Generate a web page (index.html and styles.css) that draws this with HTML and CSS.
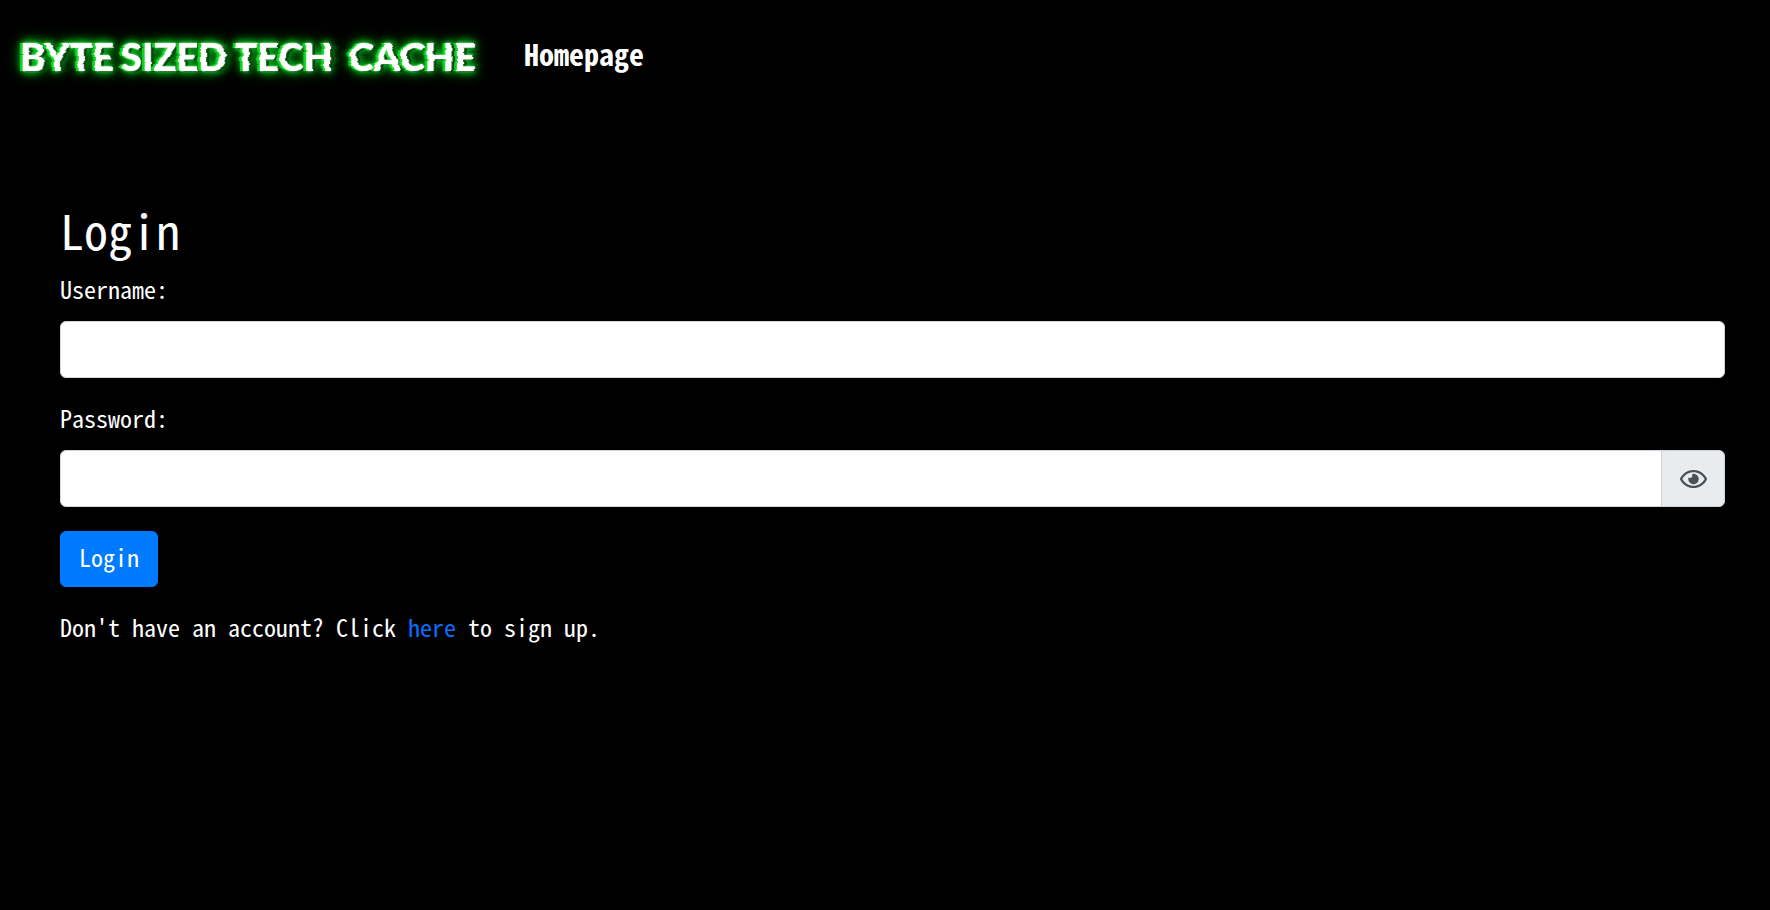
FILE: index.html
```html
<!DOCTYPE html>
<html lang="en">
<head>
<meta charset="utf-8">
<meta name="viewport" content="width=device-width, initial-scale=1">
<title>Login</title>
<link rel="stylesheet" href="styles.css">
</head>
<body>
<svg class="defs" width="0" height="0" aria-hidden="true">
  <filter id="glitch" x="-5%" y="-50%" width="110%" height="200%">
    <feTurbulence type="fractalNoise" baseFrequency="0.012 0.16" numOctaves="2" seed="4" result="noise"/>
    <feColorMatrix in="noise" type="matrix" values="1 0 0 0 0  0 0 0 0 0.5  0 0 0 0 0.5  0 0 0 0 1" result="bands"/>
    <feDisplacementMap in="SourceGraphic" in2="bands" scale="4" xChannelSelector="R" yChannelSelector="G"/>
  </filter>
</svg>
<nav class="navbar">
  <a class="brand" href="#"><span>BYTE</span> <span>SIZED</span> <span>TECH</span> <span class="brand-last">CACHE</span></a>
  <a class="nav-link" href="#">Homepage</a>
</nav>
<main class="content">
  <h1 class="title">Login</h1>
  <form class="form">
    <div class="group">
      <label class="label" for="username">Username:</label>
      <input class="control" id="username" type="text">
    </div>
    <div class="group">
      <label class="label" for="password">Password:</label>
      <div class="input-row">
        <input class="control control-joined" id="password" type="password">
        <button class="reveal" type="button" aria-label="Show password">
          <svg class="eye" viewBox="0 0 576 512" aria-hidden="true"><path fill="currentColor" d="M288 144a110.940 110.940 0 0 0-31.240 5 55.400 55.400 0 0 1 7.240 27 56 56 0 0 1-56 56 55.400 55.400 0 0 1-27-7.240A111.710 111.710 0 1 0 288 144zm284.520 97.400C518.290 135.590 410.930 64 288 64S57.680 135.640 3.480 241.410a32.350 32.350 0 0 0 0 29.190C57.710 376.410 165.070 448 288 448s230.320-71.640 284.520-177.410a32.350 32.350 0 0 0 0-29.190zM288 400c-98.650 0-189.090-55-237.930-144C98.910 167 189.340 112 288 112s189.090 55 237.930 144C477.100 345 386.660 400 288 400z"/></svg>
        </button>
      </div>
    </div>
    <button class="submit" type="submit">Login</button>
  </form>
  <p class="signup">Don't have an account? Click <a href="#">here</a> to sign up.</p>
</main>
</body>
</html>
```
FILE: styles.css
```css
* { box-sizing: border-box; }
body {
  margin: 0;
  background: #000;
  color: #fff;
  font: 24px/32px "Noto Sans Mono CJK KR", "Noto Sans Mono CJK JP", "DejaVu Sans Mono", monospace;
}
.defs { position: absolute; }
a { color: #0d6efd; text-decoration: none; }
.navbar {
  display: flex;
  align-items: center;
  gap: 48px;
  min-height: 112px;
  padding: 0 20px;
}
.brand {
  display: flex;
  gap: 7px;
  color: #fff;
  font: 900 38px/48px Lato, sans-serif;
  text-shadow: 0 0 2px #cfc, -3px 0 0 #00d018, 3px 1px 1px #003c08, 0 0 5px #0c2, 0 0 10px #00c020, 0 0 10px #00b020, 0 0 18px #009018;
  filter: url(#glitch);
}
.brand-last { margin-left: 9px; }
.nav-link { padding-bottom: 6px; color: #fff; font-size: 30px; font-weight: 700; }
.content { padding: 88px 45px 24px 60px; }
.title { margin: 0 0 15px; font-size: 48px; font-weight: 400; line-height: 58px; }
.group { margin-bottom: 24px; }
.label { display: block; margin-bottom: 16px; }
.control {
  display: block;
  width: 100%;
  height: 57px;
  padding: 9px 18px;
  border: 1px solid #ced4da;
  border-radius: 6px;
  background: #fff;
  color: #495057;
  font: inherit;
}
.input-row { display: flex; }
.control-joined { flex: 1; min-width: 0; border-radius: 6px 0 0 6px; }
.reveal {
  display: flex;
  align-items: center;
  justify-content: center;
  width: 64px;
  margin-left: -1px;
  padding: 0;
  border: 1px solid #ced4da;
  border-radius: 0 6px 6px 0;
  background: #e9ecef;
  color: #495057;
}
.eye { width: 27px; height: 24px; }
.submit {
  display: block;
  height: 56px;
  padding: 8px 18px 12px;
  border: 1px solid #007bff;
  border-radius: 6px;
  background: #007bff;
  color: #fff;
  font: inherit;
}
.signup { margin: 24px 0 0; }
```
